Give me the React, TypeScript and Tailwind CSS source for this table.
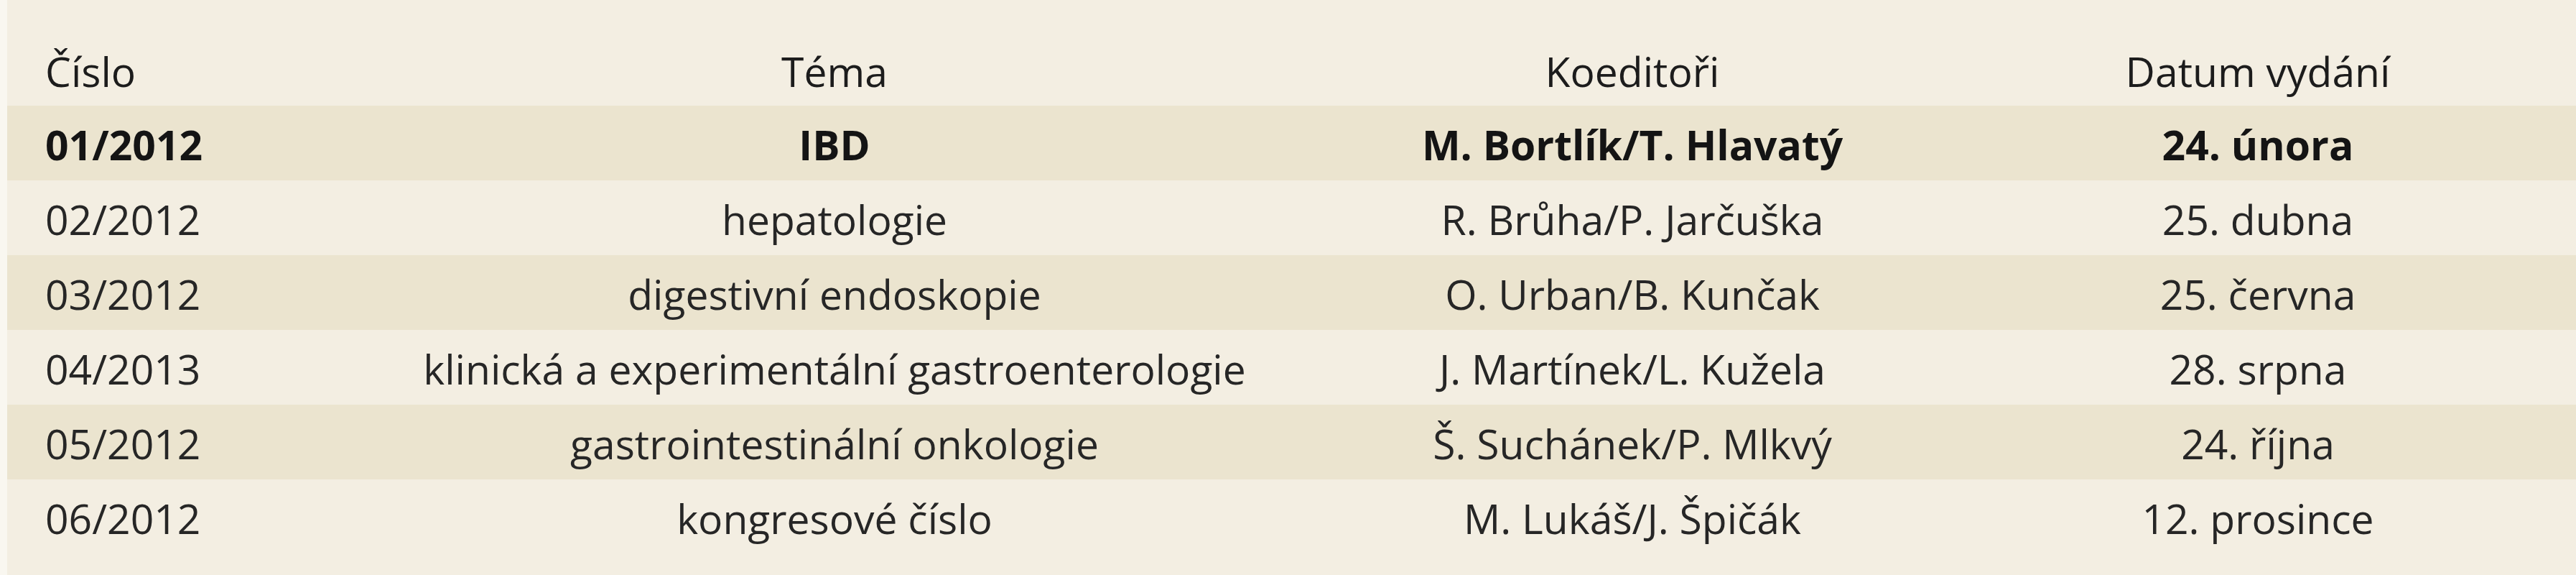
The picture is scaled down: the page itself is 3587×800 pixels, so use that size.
import React from 'react';

const rows = [
  { cislo: '01/2012', tema: 'IBD', koeditori: 'M. Bortlík/T. Hlavatý', datum: '24. února', bold: true },
  { cislo: '02/2012', tema: 'hepatologie', koeditori: 'R. Brůha/P. Jarčuška', datum: '25. dubna' },
  { cislo: '03/2012', tema: 'digestivní endoskopie', koeditori: 'O. Urban/B. Kunčak', datum: '25. června' },
  { cislo: '04/2013', tema: 'klinická a experimentální gastroenterologie', koeditori: 'J. Martínek/L. Kužela', datum: '28. srpna' },
  { cislo: '05/2012', tema: 'gastrointestinální onkologie', koeditori: 'Š. Suchánek/P. Mlkvý', datum: '24. října' },
  { cislo: '06/2012', tema: 'kongresové číslo', koeditori: 'M. Lukáš/J. Špičák', datum: '12. prosince' },
];

const grid = 'grid grid-cols-[469px_1366px_856px_1fr]';

export default function App() {
  return (
    <div className="min-h-[800px] w-[3587px] bg-[#f9f7f0] font-['Open_Sans','Noto_Sans',sans-serif] text-[57px] leading-none text-[#1c1c1c]">
      <div className="ml-[10px] min-h-[800px] bg-[#f3eee2]">
        <div className={`${grid} h-[147px] items-center pt-[52px]`}>
          <div className="pl-[53px]">Číslo</div>
          <div className="text-center">Téma</div>
          <div className="text-center">Koeditoři</div>
          <div className="text-center">Datum vydání</div>
        </div>
        {rows.map((row, i) => (
          <div
            key={row.cislo}
            className={`${grid} h-[104px] items-center pt-[4px] ${i % 2 === 0 ? 'bg-[#ebe4cf]' : 'bg-[#f3eee2]'} ${row.bold ? 'font-bold text-[#141414]' : 'text-[#262626]'}`}
          >
            <div className="pl-[53px]">{row.cislo}</div>
            <div className="text-center">{row.tema}</div>
            <div className="text-center">{row.koeditori}</div>
            <div className="text-center">{row.datum}</div>
          </div>
        ))}
      </div>
    </div>
  );
}
